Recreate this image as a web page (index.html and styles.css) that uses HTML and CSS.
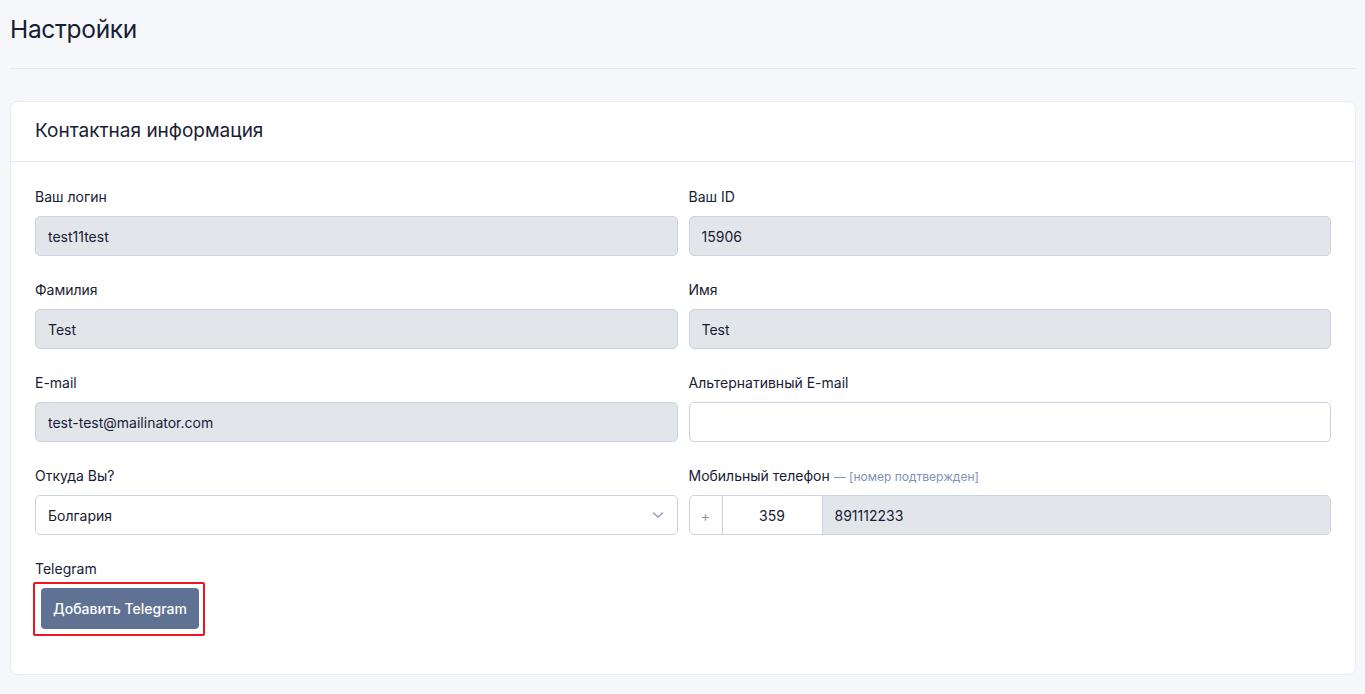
FILE: index.html
```html
<!DOCTYPE html>
<html lang="ru">
<head>
    <meta charset="UTF-8">
    <meta name="viewport" content="width=device-width, initial-scale=1.0">
    <title>Настройки</title>
    <link rel="stylesheet" href="styles.css">
</head>
<body>
    <main class="page">
        <h1 class="page-title">Настройки</h1>

        <section class="card">
            <div class="card-header">Контактная информация</div>
            <div class="card-body">
                <div class="form-grid">
                    <div class="form-group">
                        <label>Ваш логин</label>
                        <input type="text" class="field" value="test11test" disabled>
                    </div>
                    <div class="form-group">
                        <label>Ваш ID</label>
                        <input type="text" class="field" value="15906" disabled>
                    </div>
                    <div class="form-group">
                        <label>Фамилия</label>
                        <input type="text" class="field" value="Test" disabled>
                    </div>
                    <div class="form-group">
                        <label>Имя</label>
                        <input type="text" class="field" value="Test" disabled>
                    </div>
                    <div class="form-group">
                        <label>E-mail</label>
                        <input type="text" class="field" value="test-test@mailinator.com" disabled>
                    </div>
                    <div class="form-group">
                        <label>Альтернативный E-mail</label>
                        <input type="text" class="field" value="">
                    </div>
                    <div class="form-group">
                        <label>Откуда Вы?</label>
                        <div class="select-wrap">
                            <select class="field">
                                <option>Болгария</option>
                            </select>
                            <svg class="chevron" width="12" height="12" viewBox="0 0 12 12">
                                <path d="M1.5 4 L6 8 L10.5 4" fill="none" stroke="#8a97b1" stroke-width="1.3" stroke-linecap="round" stroke-linejoin="round"/>
                            </svg>
                        </div>
                    </div>
                    <div class="form-group">
                        <label>Мобильный телефон <span class="hint">— [номер подтвержден]</span></label>
                        <div class="phone-group">
                            <span class="phone-prefix">+</span>
                            <input type="text" class="phone-code" value="359">
                            <input type="text" class="phone-number" value="891112233" disabled>
                        </div>
                    </div>
                    <div class="form-group">
                        <label>Telegram</label>
                        <div class="highlight">
                            <button type="button" class="btn">Добавить Telegram</button>
                        </div>
                    </div>
                </div>
            </div>
        </section>
    </main>
</body>
</html>
```

FILE: styles.css
```css
:root {
    --text: #172033;
    --page-bg: #f6f7fb;
    --line: #e3e7ef;
    --input-border: #cbd3e1;
    --input-disabled: #e2e6ea;
    --btn: #5f7293;
}

* {
    margin: 0;
    padding: 0;
    box-sizing: border-box;
    font-family: Inter, 'Noto Sans', sans-serif;
}

body {
    background-color: var(--page-bg);
    color: var(--text);
}

.page {
    padding: 0 9px 18px 10px;
}

.page-title {
    font-size: 24.5px;
    font-weight: 400;
    letter-spacing: -0.3px;
    line-height: 30px;
    padding-top: 14px;
    padding-bottom: 24px;
    border-bottom: 1px solid var(--line);
    margin-bottom: 32px;
}

.card {
    background: white;
    border: 1px solid #e8ebf2;
    border-radius: 8px;
}

.card-header {
    font-size: 19px;
    line-height: 24px;
    padding: 17px 24px 18px;
    border-bottom: 1px solid var(--line);
}

.card-body {
    padding: 25px 24px 14px;
}

.form-grid {
    display: grid;
    grid-template-columns: 1fr 1fr;
    column-gap: 11px;
}

.form-group {
    margin-bottom: 24px;
}

.form-group label {
    display: block;
    height: 20px;
    font-size: 14px;
    line-height: 20px;
    margin-bottom: 9px;
}

.hint {
    font-size: 12px;
    line-height: 1;
    color: #8093b5;
}

.field {
    display: block;
    width: 100%;
    height: 40px;
    padding: 0 12px;
    border: 1px solid var(--input-border);
    border-radius: 5px;
    background: white;
    color: var(--text);
    font-size: 14px;
    outline: none;
}

.field:disabled {
    background: var(--input-disabled);
    color: var(--text);
    opacity: 1;
}

.select-wrap {
    position: relative;
}

.select-wrap select {
    appearance: none;
    -webkit-appearance: none;
}

.chevron {
    position: absolute;
    right: 14px;
    top: 14px;
    pointer-events: none;
}

.phone-group {
    display: flex;
    height: 40px;
    border: 1px solid var(--input-border);
    border-radius: 5px;
    overflow: hidden;
}

.phone-prefix {
    width: 33px;
    display: flex;
    align-items: center;
    justify-content: center;
    color: #8a97b1;
    font-size: 14px;
    border-right: 1px solid var(--input-border);
}

.phone-code,
.phone-number {
    border: none;
    outline: none;
    font-size: 14px;
    color: var(--text);
    height: 100%;
}

.phone-code {
    width: 100px;
    text-align: center;
    background: white;
    border-right: 1px solid var(--input-border);
}

.phone-number {
    flex: 1;
    padding: 0 12px;
    background: var(--input-disabled);
}

.highlight {
    display: inline-block;
    border: 2px solid #f0141e;
    border-radius: 2px;
    padding: 4px 4px 5px 6px;
    margin: -6px 0 0 -2px;
}

.btn {
    display: block;
    height: 41px;
    padding: 0 12px;
    background: var(--btn);
    color: white;
    border: none;
    border-radius: 4px;
    font-size: 14px;
    font-weight: 500;
    cursor: pointer;
}
```
